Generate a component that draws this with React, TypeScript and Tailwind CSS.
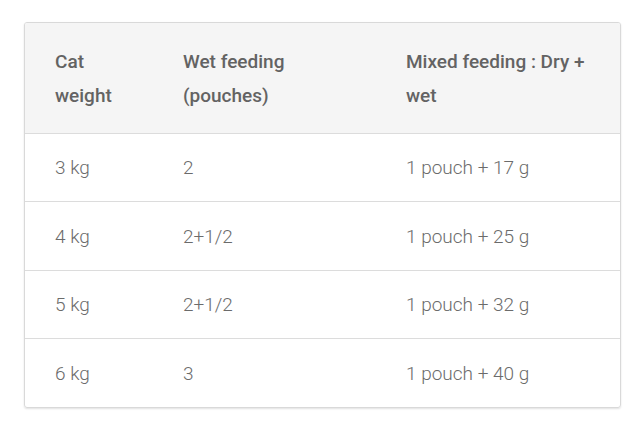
const rows = [
  ['3 kg', '2', '1 pouch + 17 g'],
  ['4 kg', '2+1/2', '1 pouch + 25 g'],
  ['5 kg', '2+1/2', '1 pouch + 32 g'],
  ['6 kg', '3', '1 pouch + 40 g'],
]

export default function App() {
  return (
    <div className="min-h-screen bg-white pt-[22px] pl-[24px]">
      <div className="w-[597px] border border-[#d9d9d9] rounded-[3px] overflow-hidden shadow-[0_1px_2px_rgba(0,0,0,0.12)] font-['Roboto',sans-serif] text-[#636363]">
        <table className="w-full border-collapse table-fixed">
          <colgroup>
            <col className="w-[128px]" />
            <col className="w-[223px]" />
            <col />
          </colgroup>
          <thead>
            <tr className="bg-[#f5f5f5] h-[110px]">
              <th className="text-left align-middle pl-[30px] pr-[20px] pt-[3px] text-[19px] leading-[34px] font-medium">Cat weight</th>
              <th className="text-left align-middle pl-[30px] pr-[20px] pt-[3px] text-[19px] leading-[34px] font-medium">Wet feeding (pouches)</th>
              <th className="text-left align-middle pl-[30px] pr-[20px] pt-[3px] text-[19px] leading-[34px] font-medium">Mixed feeding : Dry + wet</th>
            </tr>
          </thead>
          <tbody>
            {rows.map((r, i) => (
              <tr key={i} className={`${i % 2 ? 'h-[69px]' : 'h-[68px]'} border-t border-[#dcdcdc]`}>
                {r.map((c, j) => (
                  <td key={j} className="pl-[30px] pt-[3px] align-middle text-[19px] font-light text-[#6b6b6b]">{c}</td>
                ))}
              </tr>
            ))}
          </tbody>
        </table>
      </div>
    </div>
  )
}
